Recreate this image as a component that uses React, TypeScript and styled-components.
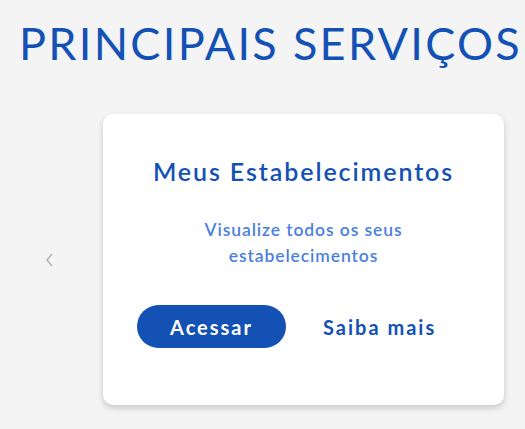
import * as React from 'react';
import styled, { createGlobalStyle } from 'styled-components';

const GlobalStyle = createGlobalStyle`
  html, body {
    margin: 0;
    padding: 0;
    background: #f4f4f4;
    font-family: Lato, "Open Sans", sans-serif;
  }
`;

const Page = styled.div`
  width: 525px;
  height: 429px;
  overflow: hidden;
  background: #f4f4f4;
`;

const Heading = styled.h1`
  margin: 0;
  padding: 16px 0 0 19px;
  font-size: 45px;
  font-weight: 400;
  line-height: 54px;
  letter-spacing: 2.3px;
  color: #1351b4;
  white-space: nowrap;
`;

const Carousel = styled.div`
  display: flex;
  align-items: center;
  margin-top: 44px;
`;

const Arrow = styled.button`
  width: 103px;
  display: flex;
  justify-content: center;
  padding: 0 6px 0 0;
  border: none;
  background: none;
  color: #b5b5b5;
`;

const Card = styled.div`
  width: 401px;
  height: 291px;
  box-sizing: border-box;
  background: #fff;
  border-radius: 10px;
  box-shadow: 0 3px 6px rgba(0, 0, 0, 0.18);
  display: flex;
  flex-direction: column;
  align-items: center;
  padding-top: 41px;
`;

const CardTitle = styled.h2`
  margin: 0;
  font-size: 25px;
  font-weight: 600;
  line-height: 32px;
  letter-spacing: 1.9px;
  color: #1351b4;
`;

const CardText = styled.p`
  margin: 30px 0 0;
  width: 250px;
  text-align: center;
  font-size: 17.5px;
  font-weight: 600;
  line-height: 26px;
  letter-spacing: 0.9px;
  color: #4a7fde;
`;

const Actions = styled.div`
  display: flex;
  align-items: center;
  align-self: flex-start;
  margin: 36px 0 0 34px;
  gap: 37px;
`;

const Button = styled.button<{ $primary?: boolean }>`
  height: 43px;
  padding: 0;
  width: ${(p) => (p.$primary ? '149px' : 'auto')};
  border: none;
  border-radius: 22px;
  background: ${(p) => (p.$primary ? '#1351b4' : 'transparent')};
  color: ${(p) => (p.$primary ? '#fff' : '#1351b4')};
  font-family: Lato, "Open Sans", sans-serif;
  font-size: 20px;
  font-weight: 700;
  letter-spacing: 2px;
`;

export default function App() {
  return (
    <Page>
      <GlobalStyle />
      <Heading>PRINCIPAIS SERVIÇOS</Heading>
      <Carousel>
        <Arrow aria-label="Anterior">
          <svg width="10" height="16" viewBox="0 0 10 16" fill="none">
            <path d="M8 2 L3 8 L8 14" stroke="currentColor" strokeWidth="1.6" />
          </svg>
        </Arrow>
        <Card>
          <CardTitle>Meus Estabelecimentos</CardTitle>
          <CardText>Visualize todos os seus estabelecimentos</CardText>
          <Actions>
            <Button $primary>Acessar</Button>
            <Button>Saiba mais</Button>
          </Actions>
        </Card>
      </Carousel>
    </Page>
  );
}
